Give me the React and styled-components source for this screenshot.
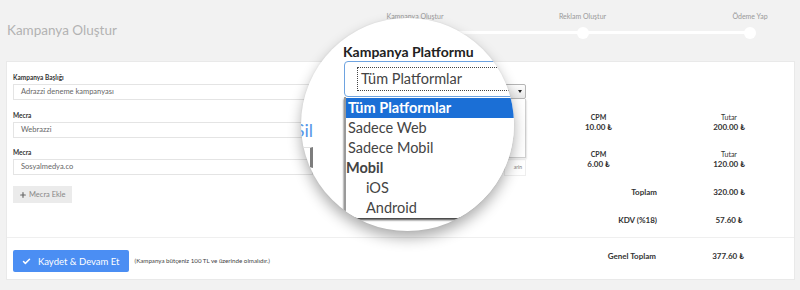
import React from 'react'
import styled, { createGlobalStyle } from 'styled-components'
import { Check, Plus } from 'lucide-react'

const GlobalStyle = createGlobalStyle`
    body {
        margin: 0;
        background: #f2f2f2;
        font-family: Lato, "Open Sans", "DejaVu Sans", sans-serif;
    }
`

const Page = styled.div`
    position: relative;
    width: 800px;
    height: 290px;
    overflow: hidden;
`

const Header = styled.header`
    display: flex;
    align-items: flex-start;
    height: 61px;
    padding: 0 10px 0 7px;
    box-sizing: border-box;
`

const Title = styled.h1`
    margin: 22px 0 0;
    font-size: 13.5px;
    line-height: 17px;
    font-weight: 400;
    color: #b3b3b3;
`

const Stepper = styled.ol`
    position: relative;
    display: flex;
    gap: 87.5px;
    margin: 11px 0 0 auto;
    padding: 0;
    list-style: none;
    &::before {
        content: '';
        position: absolute;
        left: 40px;
        right: 40px;
        top: 20px;
        height: 3px;
        background: #fff;
    }
`

const Step = styled.li`
    position: relative;
    display: flex;
    flex-direction: column;
    align-items: center;
    width: 80px;
    font-size: 7px;
    line-height: 10px;
    color: #999;
`

const Dot = styled.span`
    width: 12px;
    height: 12px;
    margin-top: 6px;
    border-radius: 50%;
    background: #fff;
`

const Card = styled.section`
    margin: 0 5px 0 6px;
    height: 219px;
    box-sizing: border-box;
    background: #fff;
    border: 1px solid #e9e9e9;
`

const TopSection = styled.div`
    display: flex;
    height: 176px;
    box-sizing: border-box;
    padding: 11px 0 0 6px;
    border-bottom: 1px solid #efefef;
`

const FormColumn = styled.div`
    display: flex;
    flex-direction: column;
    align-items: flex-start;
    gap: 10.5px;
    width: 300px;
`

const Field = styled.div`
    display: flex;
    flex-direction: column;
    gap: 2px;
    width: 100%;
`

const Label = styled.label`
    font-size: 6.5px;
    line-height: 9px;
    font-weight: 700;
    color: #333;
`

const Input = styled.div`
    height: 16px;
    box-sizing: border-box;
    padding-left: 7px;
    border: 1px solid #e4e4e4;
    font-size: 7.5px;
    line-height: 14px;
    color: #666;
`

const AddButton = styled.button`
    display: flex;
    align-items: center;
    gap: 2px;
    height: 17px;
    margin-top: 0.5px;
    padding: 0 6px;
    border: none;
    background: #ebebeb;
    font-family: inherit;
    font-size: 7.5px;
    color: #888;
`

const PlatformColumn = styled.div`
    display: flex;
    flex-direction: column;
    width: 196px;
    margin-left: 17px;
    padding-top: 11px;
`

const SmallSelect = styled.div`
    position: relative;
    height: 15px;
    box-sizing: border-box;
    border: 1px solid #b5b5b5;
    border-radius: 2px;
    background: linear-gradient(#fdfdfd, #e8e8e8);
    &::after {
        content: '';
        position: absolute;
        right: 3px;
        top: 5px;
        border: 2px solid transparent;
        border-top: 3px solid #222;
    }
`

const SmallList = styled.div`
    height: 59px;
    box-sizing: border-box;
    background: #fff;
    border: 1px solid #cfcfcf;
    border-top: none;
    box-shadow: 0 1px 2px rgba(0, 0, 0, 0.25);
`

const SmallBox = styled.div`
    align-self: flex-end;
    width: 22px;
    height: 18px;
    box-sizing: border-box;
    padding-right: 3px;
    border: 1px solid #eee;
    font-size: 5px;
    line-height: 16px;
    text-align: right;
    color: #777;
`

const Totals = styled.div`
    display: grid;
    grid-template-columns: 117px 120px;
    column-gap: 12px;
    row-gap: 16px;
    align-content: start;
    margin-left: 14px;
    padding-top: ${p => p.$top || 0}px;
`

const Cell = styled.div`
    display: flex;
    flex-direction: column;
    align-items: ${p => (p.$right ? 'flex-end' : 'center')};
    color: #333;
`

const CellLabel = styled.span`
    font-size: 7px;
    line-height: 10px;
    font-weight: ${p => (p.$bold ? 700 : 400)};
`

const CellValue = styled.span`
    font-size: 8px;
    line-height: ${p => p.$lh || 11}px;
    font-weight: ${p => (p.$bold ? 700 : 400)};
`

const BottomSection = styled.div`
    display: flex;
    align-items: flex-start;
    padding: 12px 0 0 6px;
`

const SaveButton = styled.button`
    display: flex;
    align-items: center;
    gap: 7px;
    height: 22px;
    padding: 0 9px;
    border: none;
    border-radius: 2px;
    background: #4b8ef3;
    font-family: inherit;
    font-size: 9.5px;
    color: #fff;
`

const Note = styled.span`
    margin: 0 0 0 6px;
    font-size: 6.2px;
    line-height: 22px;
    color: #444;
`

const Magnifier = styled.div`
    position: absolute;
    left: 301px;
    top: 18px;
    width: 213px;
    height: 213px;
    display: grid;
    grid-template-columns: 42px 1fr;
    border-radius: 50%;
    overflow: hidden;
    background: #fff;
    box-shadow: 0 7px 14px rgba(0, 0, 0, 0.32), 0 0 2px rgba(0, 0, 0, 0.08);
`

const MagSide = styled.div`
    display: flex;
    flex-direction: column;
    align-items: flex-end;
    padding: 103px 30px 0 0;
`

const MagLink = styled.span`
    font-size: 18px;
    line-height: 18px;
    color: #5696e8;
`

const MagEdge = styled.div`
    width: 12px;
    height: 21px;
    margin-top: 8px;
    box-sizing: border-box;
    border: 1px solid #e2e2e2;
    border-right: 3px solid #7d7d7d;
`

const MagMain = styled.div`
    display: flex;
    flex-direction: column;
    padding-top: 25px;
`

const MagHeading = styled.div`
    font-size: 14px;
    line-height: 17px;
    font-weight: 700;
    color: #222;
    white-space: nowrap;
`

const MagSelect = styled.div`
    width: 200px;
    height: 36px;
    margin: 1px 0 0 1px;
    padding: 5px 0 0 12px;
    box-sizing: border-box;
    border: 1px solid #6ea3e0;
    border-radius: 4px;
`

const FocusRing = styled.div`
    height: 24px;
    box-sizing: border-box;
    padding-left: 3px;
    border: 1px dotted #444;
    border-right: none;
    font-size: 14.5px;
    line-height: 22px;
    color: #444;
    white-space: nowrap;
`

const MagList = styled.ul`
    width: 171px;
    margin: 0 0 0 1px;
    padding: 1px 0 0;
    list-style: none;
    background: #fff;
    border-left: 2px solid #9a9a9a;
    box-shadow: 0 2px 2px rgba(0, 0, 0, 0.75);
`

const Option = styled.li`
    height: 20px;
    padding-left: ${p => (p.$group ? 0 : p.$indent ? 20 : 2)}px;
    font-size: 14.5px;
    line-height: 20px;
    font-weight: ${p => (p.$selected || p.$group ? 700 : 400)};
    color: ${p => (p.$selected ? '#fff' : '#444')};
    background: ${p => (p.$selected ? '#1b6fd6' : 'transparent')};
    white-space: nowrap;
`

const steps = ['Kampanya Oluştur', 'Reklam Oluştur', 'Ödeme Yap']

const media = [
    { cpm: '10.00 ₺', total: '200.00 ₺' },
    { cpm: '6.00 ₺', total: '120.00 ₺' },
]

const options = [
    { text: 'Tüm Platformlar', selected: true },
    { text: 'Sadece Web' },
    { text: 'Sadece Mobil' },
    { text: 'Mobil', group: true },
    { text: 'iOS', indent: true },
    { text: 'Android', indent: true },
]

const App = () => {
    return (
        <Page>
            <GlobalStyle />
            <Header>
                <Title>Kampanya Oluştur</Title>
                <Stepper>
                    {steps.map(s => (
                        <Step key={s}>
                            {s}
                            <Dot />
                        </Step>
                    ))}
                </Stepper>
            </Header>
            <Card>
                <TopSection>
                    <FormColumn>
                        <Field>
                            <Label>Kampanya Başlığı</Label>
                            <Input>Adrazzi deneme kampanyası</Input>
                        </Field>
                        <Field>
                            <Label>Mecra</Label>
                            <Input>Webrazzi</Input>
                        </Field>
                        <Field>
                            <Label>Mecra</Label>
                            <Input>Sosyalmedya.co</Input>
                        </Field>
                        <AddButton>
                            <Plus size={8} strokeWidth={3.5} color="#666" />
                            Mecra Ekle
                        </AddButton>
                    </FormColumn>
                    <PlatformColumn>
                        <SmallSelect />
                        <SmallList />
                        <SmallBox>arin</SmallBox>
                    </PlatformColumn>
                    <Totals $top={39}>
                        {media.map((m, i) => (
                            <React.Fragment key={i}>
                                <Cell>
                                    <CellLabel $bold>CPM</CellLabel>
                                    <CellValue $bold>{m.cpm}</CellValue>
                                </Cell>
                                <Cell>
                                    <CellLabel>Tutar</CellLabel>
                                    <CellValue $bold>{m.total}</CellValue>
                                </Cell>
                            </React.Fragment>
                        ))}
                        <Cell $right>
                            <CellValue $bold $lh={12}>Toplam</CellValue>
                        </Cell>
                        <Cell>
                            <CellValue $bold $lh={12}>320.00 ₺</CellValue>
                        </Cell>
                        <Cell $right>
                            <CellValue $bold $lh={12}>KDV (%18)</CellValue>
                        </Cell>
                        <Cell>
                            <CellValue $bold $lh={12}>57.60 ₺</CellValue>
                        </Cell>
                    </Totals>
                </TopSection>
                <BottomSection>
                    <SaveButton>
                        <Check size={9} strokeWidth={4} />
                        Kaydet &amp; Devam Et
                    </SaveButton>
                    <Note>(Kampanya bütçeniz 100 TL ve üzerinde olmalıdır.)</Note>
                    <Totals style={{ marginLeft: 'auto', marginRight: '6px' }}>
                        <Cell $right>
                            <CellValue $bold $lh={12}>Genel Toplam</CellValue>
                        </Cell>
                        <Cell>
                            <CellValue $bold $lh={12}>377.60 ₺</CellValue>
                        </Cell>
                    </Totals>
                </BottomSection>
            </Card>
            <Magnifier>
                <MagSide>
                    <MagLink>Sil</MagLink>
                    <MagEdge />
                </MagSide>
                <MagMain>
                    <MagHeading>Kampanya Platformu</MagHeading>
                    <MagSelect>
                        <FocusRing>Tüm Platformlar</FocusRing>
                    </MagSelect>
                    <MagList>
                        {options.map(o => (
                            <Option key={o.text} $selected={o.selected} $group={o.group} $indent={o.indent}>
                                {o.text}
                            </Option>
                        ))}
                    </MagList>
                </MagMain>
            </Magnifier>
        </Page>
    )
}

export default App
